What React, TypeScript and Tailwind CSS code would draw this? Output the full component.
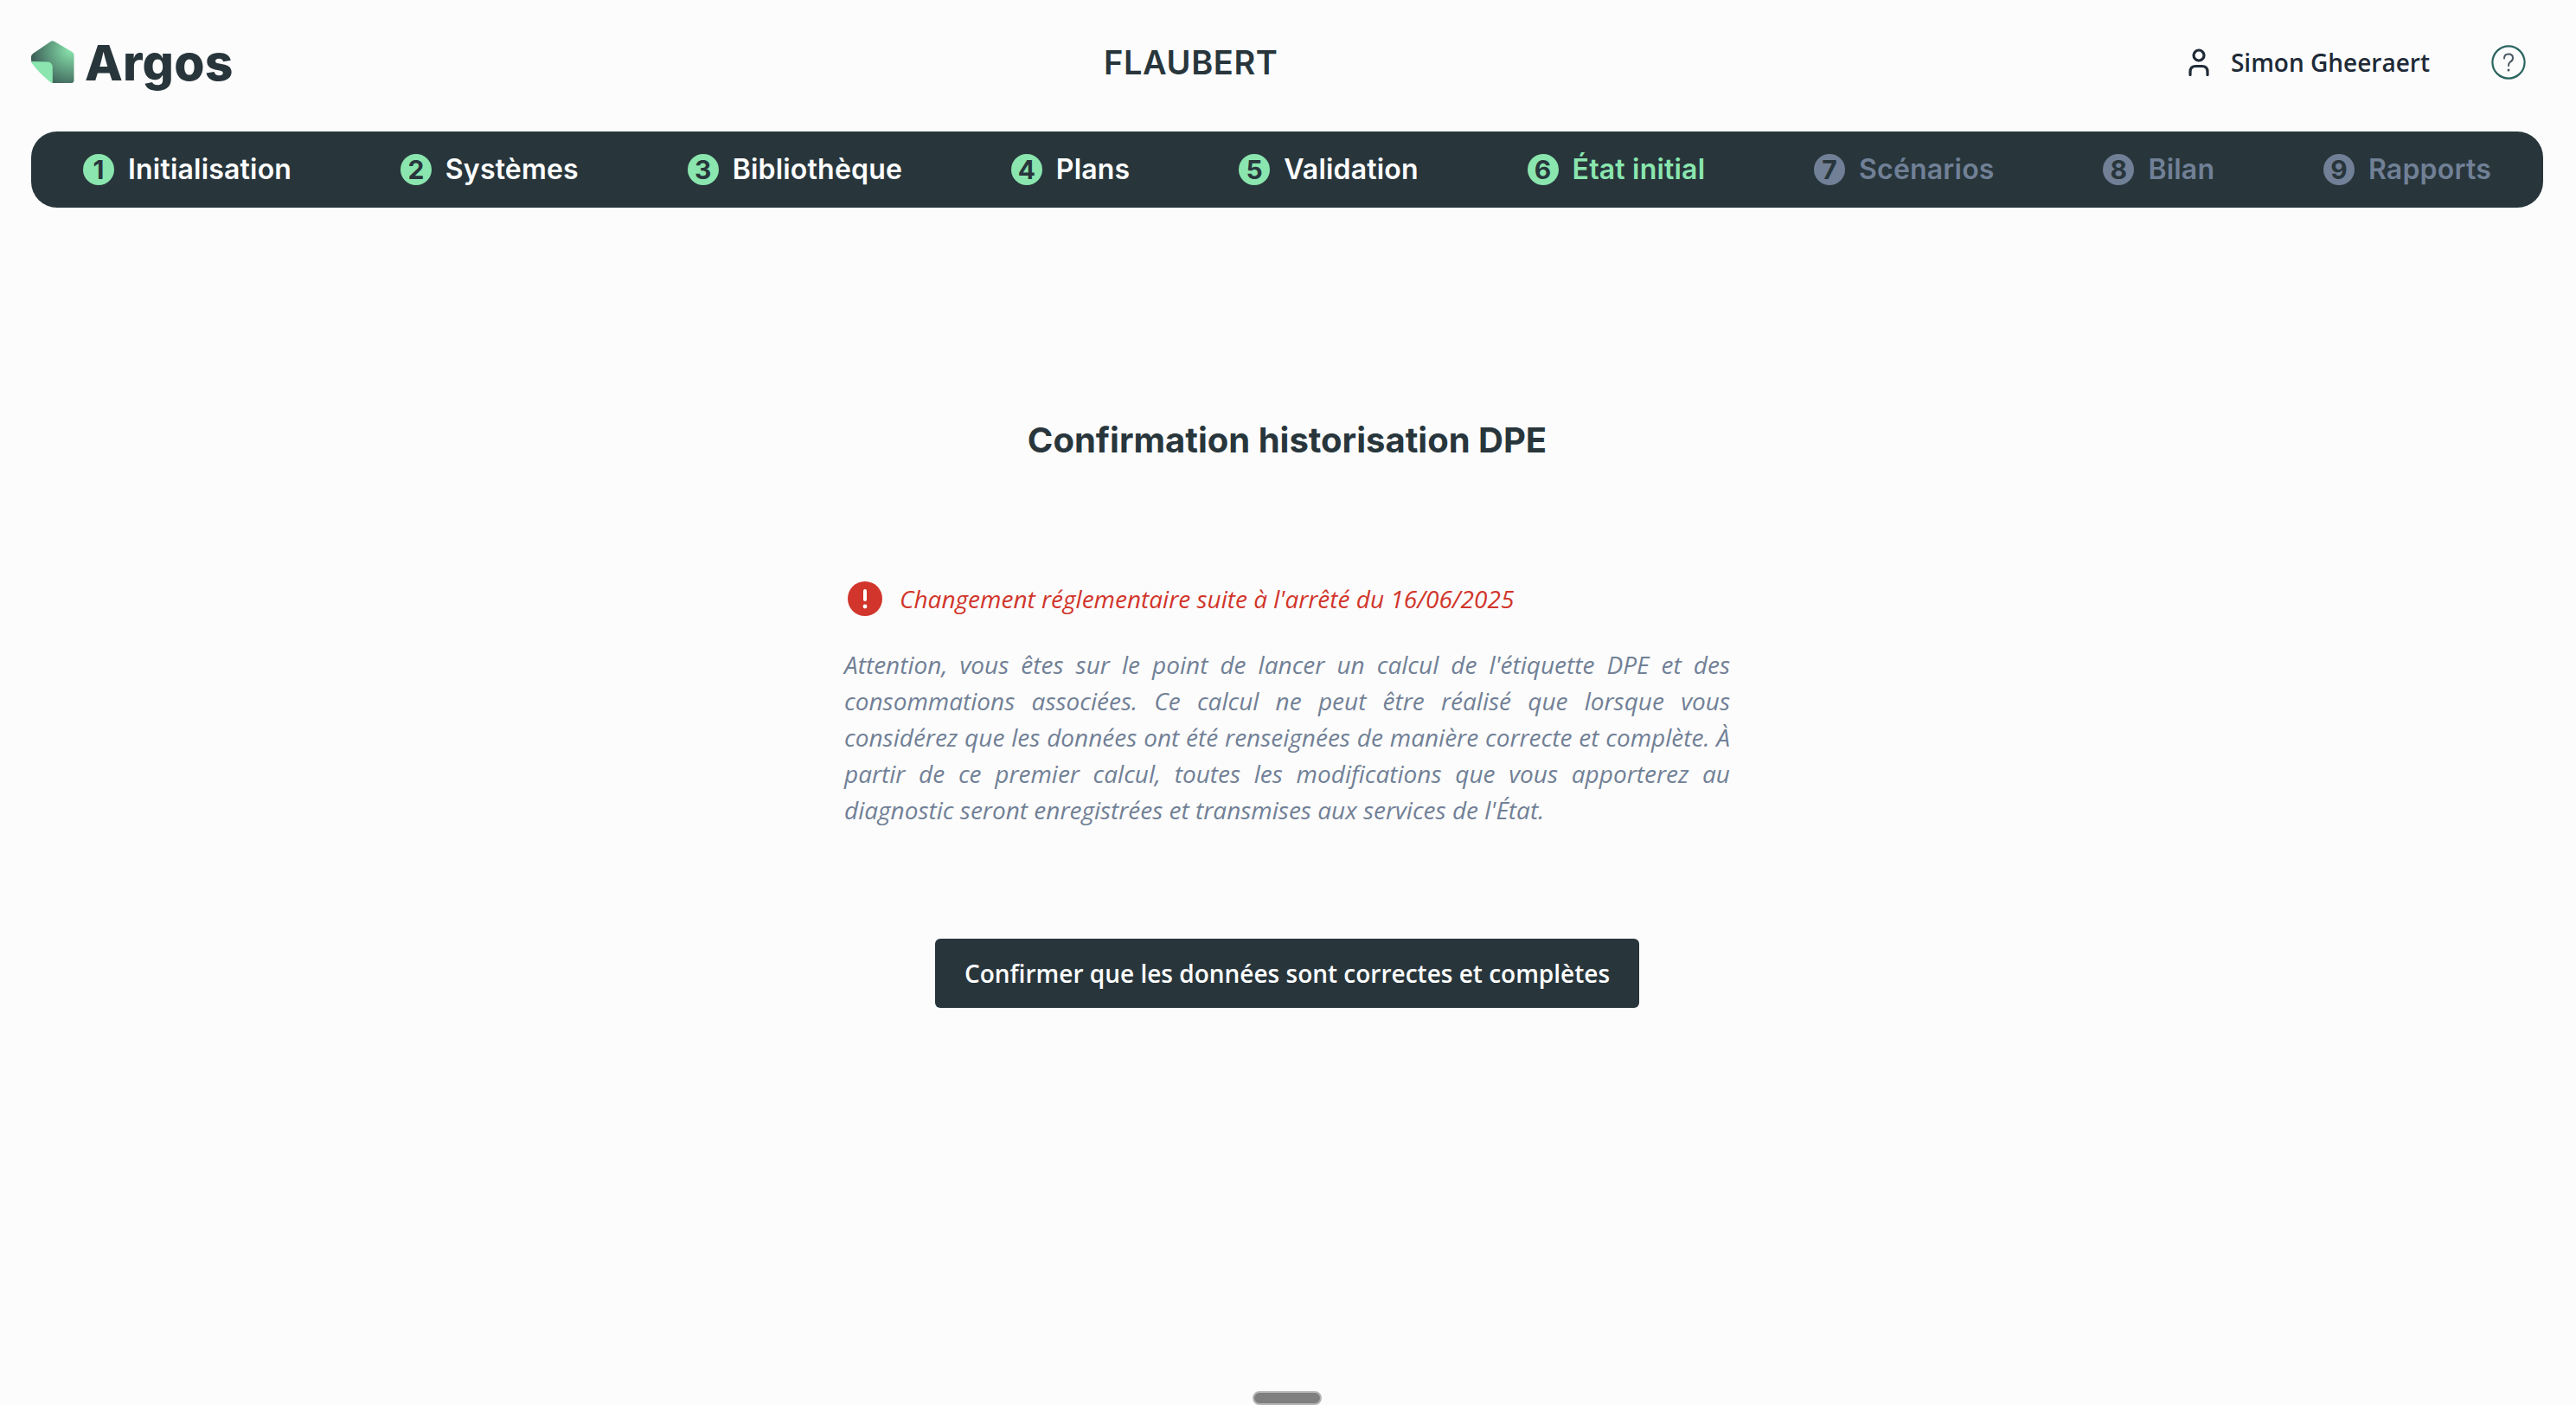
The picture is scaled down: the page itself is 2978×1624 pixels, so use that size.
import React from 'react';

const steps = [
  { n: 1, label: 'Initialisation', state: 'done' },
  { n: 2, label: 'Systèmes', state: 'done' },
  { n: 3, label: 'Bibliothèque', state: 'done' },
  { n: 4, label: 'Plans', state: 'done' },
  { n: 5, label: 'Validation', state: 'done' },
  { n: 6, label: 'État initial', state: 'active' },
  { n: 7, label: 'Scénarios', state: 'off' },
  { n: 8, label: 'Bilan', state: 'off' },
  { n: 9, label: 'Rapports', state: 'off' },
];

const Logo = () => (
  <svg width="50" height="50" viewBox="0 0 50 50" className="shrink-0">
    <defs>
      <radialGradient id="logoShade" gradientUnits="userSpaceOnUse" cx="46" cy="10" r="46">
        <stop offset="0" stopColor="#8ae6ae" />
        <stop offset="1" stopColor="#3c5f58" />
      </radialGradient>
    </defs>
    <path d="M22.5 1 Q24.7 -0.5 27 1 L47.5 13 Q49.5 14.2 49.5 16.5 L49.5 46 Q49.5 49 46.5 49 L26 49 Q24 49 22 46.5 L2 27 Q0 25 0 22 L0 18.5 Q0 16.5 2 15 Z" fill="url(#logoShade)" />
    <path d="M0.5 24 L19 24.5 Q24.8 25 24.8 31 L24.8 48.8 Q22.5 48.5 20.5 46.5 Q8 36 2 27.5 Q0.8 26 0.5 24 Z" fill="#8ae6ae" />
  </svg>
);

const UserIcon = () => (
  <svg width="24" height="32" viewBox="0 0 24 32" fill="none" stroke="#1f2a37" strokeWidth="3.2" strokeLinecap="round" className="shrink-0">
    <circle cx="12" cy="8" r="6" />
    <path d="M2 30.5 V27 Q2 20.5 8.5 20.5 H15.5 Q22 20.5 22 27 V30.5" />
  </svg>
);

const HelpIcon = () => (
  <svg width="40" height="40" viewBox="0 0 40 40" fill="none" className="block">
    <circle cx="20" cy="20" r="18.6" stroke="#2b6560" strokeWidth="2.2" />
    <path d="M15 15.5 Q15 10.5 20 10.5 Q25 10.5 25 15 Q25 18 22 19.5 Q20 20.8 20 24" stroke="#4b5563" strokeWidth="2" strokeLinecap="round" />
    <circle cx="20" cy="29" r="1.5" fill="#4b5563" />
  </svg>
);

const Badge: React.FC<{ n: number; off: boolean }> = ({ n, off }) => (
  <span className={`flex h-[36px] w-[36px] shrink-0 items-center justify-center rounded-full text-[30px] leading-none font-bold text-[#28363c] ${off ? 'bg-[#718096]' : 'bg-[#8ae6ae]'}`}>
    {n}
  </span>
);

export default function App() {
  return (
    <div className="relative h-[1624px] w-full overflow-hidden bg-[#fcfcfc] font-['Inter',sans-serif]">
      <header className="flex h-[152px] items-center justify-between pl-[36px] pr-[58px] pb-[8px]">
        <div className="flex items-center gap-[12px]">
          <Logo />
          <span className="text-[57px] leading-none font-extrabold tracking-[0.2px] text-[#28363c]">Argos</span>
        </div>
        <div className="mr-[46px] text-[38px] font-semibold tracking-[0.6px] text-[#28363c]">FLAUBERT</div>
        <div className="flex items-center">
          <UserIcon />
          <span className="ml-[25px] font-['Open_Sans',sans-serif] text-[28px] font-semibold text-[#1f2a37]">Simon Gheeraert</span>
          <span className="ml-[71px]"><HelpIcon /></span>
        </div>
      </header>

      <nav className="ml-[36px] mr-[38px] flex h-[88px] items-center justify-between rounded-[30px] bg-[#28363c] px-[60px]">
        {steps.map((s) => (
          <div key={s.n} className="flex items-center gap-[16px]">
            <Badge n={s.n} off={s.state === 'off'} />
            <span className={`text-[32px] font-semibold tracking-[0.2px] ${s.state === 'done' ? 'text-white' : s.state === 'active' ? 'text-[#8ae6ae]' : 'text-[#718096]'}`}>
              {s.label}
            </span>
          </div>
        ))}
      </nav>

      <main className="flex flex-col items-center pr-[2px]">
        <h1 className="mt-[240px] text-[40px] leading-[58px] font-bold text-[#28363c]">Confirmation historisation DPE</h1>

        <div className="mt-[133px] w-[1024px] font-['Open_Sans',sans-serif]">
          <div className="flex items-center gap-[20px] pl-[4px]">
            <svg width="40" height="40" viewBox="0 0 40 40" className="shrink-0">
              <circle cx="20" cy="20" r="20" fill="#d1352b" />
              <rect x="18" y="9" width="4" height="14" rx="2" fill="#fff" />
              <circle cx="20" cy="29" r="2.4" fill="#fff" />
            </svg>
            <span className="text-[28px] leading-[42px] italic text-[#d1352b]">Changement réglementaire suite à l'arrêté du 16/06/2025</span>
          </div>
          <p className="mt-[34px] text-justify text-[28px] leading-[42px] italic text-[#718096]">
            Attention, vous êtes sur le point de lancer un calcul de l'étiquette DPE et des consommations associées. Ce calcul ne peut être réalisé que lorsque vous considérez que les données ont été renseignées de manière correcte et complète. À partir de ce premier calcul, toutes les modifications que vous apporterez au diagnostic seront enregistrées et transmises aux services de l'État.
          </p>
        </div>

        <button className="mt-[128px] flex h-[80px] items-center rounded-[6px] bg-[#28363c] px-[34px] font-['Open_Sans',sans-serif] text-[28px] font-semibold text-white">
          Confirmer que les données sont correctes et complètes
        </button>
      </main>

      <div className="absolute bottom-0 left-[1448px] h-[16px] w-[80px] rounded-full border-2 border-[#b5b5b5] bg-[#7f7f7f]" />
    </div>
  );
}
